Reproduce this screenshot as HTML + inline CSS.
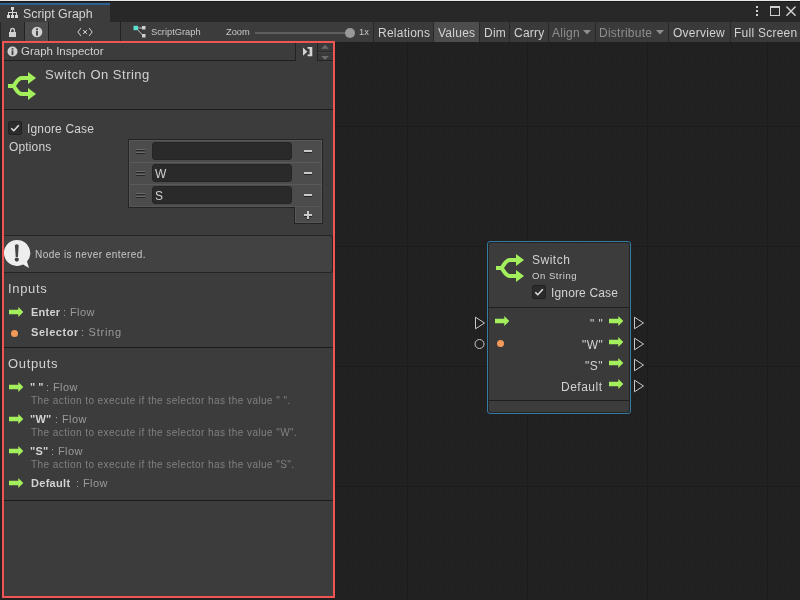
<!DOCTYPE html>
<html><head><meta charset="utf-8">
<style>
*{margin:0;padding:0;box-sizing:border-box}
html,body{width:800px;height:600px;overflow:hidden;background:#212121;font-family:"Liberation Sans",sans-serif;}
.a{position:absolute}
.t{position:absolute;white-space:nowrap;line-height:1;color:#d2d2d2;-webkit-font-smoothing:antialiased;will-change:transform}
#grid{left:335px;top:42px;width:465px;height:558px;background-color:#212121;
background-image:
linear-gradient(to right,#1b1b1b 1px,transparent 1px),
linear-gradient(to bottom,#1b1b1b 1px,transparent 1px),
linear-gradient(to right,#1f1f1f 1px,transparent 1px),
linear-gradient(to bottom,#202020 1px,transparent 1px);
background-size:120px 120px,120px 120px,12px 12px,12px 12px;
background-position:72px 84px,72px 84px,0px 0px,0px 0px;}
.btn{position:absolute;top:22px;height:20px;background:#3a3a3a}
.sep{position:absolute;height:1px;background:#1c1c1c}
</style></head><body>
<!-- top strip -->
<div class="a" style="left:0;top:0;width:800px;height:1px;background:#e8e8e8"></div>
<div class="a" style="left:0;top:1px;width:800px;height:21px;background:#282828"></div>
<div class="a" style="left:0;top:1px;width:800px;height:1px;background:#1a1a1a"></div>
<!-- tab -->
<div class="a" style="left:0;top:3px;width:110px;height:19px;background:#3c3c3c"></div>
<div class="a" style="left:0;top:3px;width:110px;height:2px;background:#2d6194"></div>
<svg class="a" style="left:7px;top:7px" width="12" height="11" viewBox="0 0 12 11">
<g fill="#d8d8d8"><rect x="4" y="0" width="3" height="3"/><rect x="5" y="3" width="1" height="2"/><rect x="1" y="5" width="9" height="1"/><rect x="1" y="5" width="1" height="3"/><rect x="9" y="5" width="1" height="3"/><rect x="5" y="5" width="1" height="3"/><rect x="0" y="8" width="3" height="3"/><rect x="4" y="8" width="3" height="3"/><rect x="8" y="8" width="3" height="3"/></g></svg>
<div class="t" style="left:23px;top:8px;font-size:12.4px;color:#d4d4d4">Script Graph</div>
<!-- window icons -->
<div class="a" style="left:756px;top:6px;width:2px;height:2px;background:#d0d0d0"></div>
<div class="a" style="left:756px;top:10px;width:2px;height:2px;background:#d0d0d0"></div>
<div class="a" style="left:756px;top:14px;width:2px;height:2px;background:#d0d0d0"></div>
<div class="a" style="left:770px;top:6px;width:10px;height:10px;border:1px solid #d0d0d0;border-top-width:2px"></div>
<svg class="a" style="left:786px;top:6px" width="11" height="11" viewBox="0 0 11 11"><path d="M0.9 1L9.1 9.2M9.1 1L0.9 9.2" stroke="#d0d0d0" stroke-width="1.5" stroke-linecap="round"/></svg>

<!-- toolbar -->
<div class="a" style="left:0;top:22px;width:800px;height:20px;background:#282828"></div>
<div class="a" style="left:1px;top:22px;width:372px;height:20px;background:#3c3c3c"></div>
<div class="a" style="left:25px;top:22px;width:23px;height:19px;background:#4c4c4c"></div>
<div class="a" style="left:24px;top:22px;width:1px;height:19px;background:#232323"></div>
<div class="a" style="left:48px;top:22px;width:1px;height:19px;background:#232323"></div>
<div class="a" style="left:120px;top:22px;width:1px;height:19px;background:#232323"></div>
<!-- lock -->
<svg class="a" style="left:8px;top:27px" width="10" height="11" viewBox="0 0 10 11"><path d="M2.6 5.2V3.4a1.9 1.9 0 0 1 3.8 0V5.2" fill="none" stroke="#d0d0d0" stroke-width="1.3"/><rect x="1" y="5" width="7" height="5" fill="#d0d0d0"/></svg>
<!-- info -->
<svg class="a" style="left:31px;top:26px" width="12" height="12" viewBox="0 0 12 12"><circle cx="6" cy="6" r="5.3" fill="#d0d0d0"/><rect x="5.1" y="2.4" width="1.8" height="1.6" fill="#3a3a3a"/><rect x="5.1" y="4.8" width="1.8" height="4.8" fill="#3a3a3a"/></svg>
<!-- <x> -->
<svg class="a" style="left:77px;top:27px" width="16" height="10" viewBox="0 0 16 10"><path d="M4 1L0.8 5L4 9M12 1L15.2 5L12 9M6 3L10 7M10 3L6 7" fill="none" stroke="#d0d0d0" stroke-width="1"/></svg>
<!-- scriptgraph icon -->
<svg class="a" style="left:133px;top:25px" width="14" height="14" viewBox="0 0 14 14"><path d="M3 3H10M3 3L10 10.5" stroke="#bdbdbd" stroke-width="1"/><rect x="0.5" y="0.8" width="4.5" height="4.4" fill="#5ce0d0"/><rect x="9" y="1" width="3.5" height="3.5" fill="#cfcfcf"/><rect x="9" y="9" width="3.5" height="3.5" fill="#cfcfcf"/></svg>
<div class="t" style="left:151px;top:28px;font-size:9.3px;color:#c8c8c8">ScriptGraph</div>
<div class="t" style="left:226px;top:28px;font-size:9.3px;color:#c8c8c8">Zoom</div>
<div class="a" style="left:255px;top:32px;width:95px;height:2px;background:#5e5e5e"></div>
<div class="a" style="left:345px;top:28px;width:10px;height:10px;border-radius:50%;background:#999"></div>
<div class="t" style="left:359px;top:28px;font-size:9.3px;color:#c8c8c8">1x</div>

<div class="btn" style="left:374px;width:59px"></div>
<div class="btn" style="left:434px;width:45px;background:#4d4d4d"></div>
<div class="btn" style="left:480px;width:29px"></div>
<div class="btn" style="left:510px;width:38px"></div>
<div class="btn" style="left:549px;width:46px"></div>
<div class="btn" style="left:596px;width:72px"></div>
<div class="btn" style="left:669px;width:61px"></div>
<div class="btn" style="left:731px;width:69px"></div>
<div class="t" style="left:378px;top:27px;font-size:12px;letter-spacing:0.25px">Relations</div>
<div class="t" style="left:438px;top:27px;font-size:12px;letter-spacing:0.25px">Values</div>
<div class="t" style="left:484px;top:27px;font-size:12px;letter-spacing:0.25px">Dim</div>
<div class="t" style="left:514px;top:27px;font-size:12px;letter-spacing:0.25px">Carry</div>
<div class="t" style="left:552px;top:27px;font-size:12px;letter-spacing:0.25px;color:#8e8e8e">Align</div>
<svg class="a" style="left:583px;top:30px" width="8" height="5"><path d="M0 0H8L4 4.5Z" fill="#8e8e8e"/></svg>
<div class="t" style="left:599px;top:27px;font-size:12px;letter-spacing:0.25px;color:#8e8e8e">Distribute</div>
<svg class="a" style="left:656px;top:30px" width="8" height="5"><path d="M0 0H8L4 4.5Z" fill="#8e8e8e"/></svg>
<div class="t" style="left:673px;top:27px;font-size:12px;letter-spacing:0.25px">Overview</div>
<div class="t" style="left:734px;top:27px;font-size:12px;letter-spacing:0.25px">Full Screen</div>

<!-- graph -->
<div id="grid" class="a"></div>

<!-- inspector -->
<div class="a" style="left:0;top:41px;width:2px;height:559px;background:#232323"></div>
<div class="a" style="left:2px;top:41px;width:333px;height:557px;border:2px solid #f05454;background:#3c3c3c"></div>
<div class="a" style="left:4px;top:43px;width:291px;height:17px;background:#3c3c3c"></div>
<div class="sep" style="left:4px;top:60px;width:292px;background:#1e1e1e"></div>
<svg class="a" style="left:7px;top:46px" width="11" height="11" viewBox="0 0 11 11"><circle cx="5.5" cy="5.5" r="5" fill="#d0d0d0"/><rect x="4.6" y="2.2" width="1.8" height="1.5" fill="#3c3c3c"/><rect x="4.6" y="4.4" width="1.8" height="4.5" fill="#3c3c3c"/></svg>
<div class="t" style="left:21px;top:46px;font-size:11.5px">Graph Inspector</div>
<div class="a" style="left:295px;top:43px;width:1px;height:18px;background:#232323"></div>
<svg class="a" style="left:302px;top:46px" width="12" height="12" viewBox="0 0 12 12"><path d="M1 1.6L5.3 5.7L1 9.8Z" fill="#d4d4d4"/><path d="M5.6 1H10.3V10.3H5.6V8.6H7.6V2.7H5.6Z" fill="#d4d4d4"/></svg>
<div class="a" style="left:317px;top:43px;width:16px;height:18px;background:#3a3a3a;border-left:1px solid #232323;border-bottom:1px solid #232323"></div>
<div class="a" style="left:318px;top:51px;width:15px;height:1px;background:#2a2a2a"></div>
<div class="a" style="left:318px;top:52px;width:15px;height:1px;background:#424242"></div>
<svg class="a" style="left:318px;top:43px" width="15" height="18"><path d="M3.2 5.8L7 1.8L10.8 5.8Z" fill="#6c6c6c"/><path d="M3.2 13L7 17L10.8 13Z" fill="#6c6c6c"/></svg>

<!-- icon -->
<svg class="a" style="left:8px;top:72px" width="29" height="29" viewBox="0 0 29 29"><g fill="none" stroke="#a3f05c" stroke-width="4"><path d="M0 14H4.5C7.5 14 8.5 6 14 6H21"/><path d="M4.5 14C7.5 14 8.5 22 14 22H21"/></g><g fill="#a3f05c"><path d="M20 0L28 6L20 12Z"/><path d="M20 16L28 22L20 28Z"/></g></svg>
<div class="t" style="left:45px;top:68px;font-size:13px;letter-spacing:0.5px">Switch On String</div>
<div class="sep" style="left:4px;top:109px;width:329px"></div>

<!-- ignore case -->
<div class="a" style="left:8px;top:121px;width:14px;height:14px;border-radius:2px;background:#2b2b2b;border:1px solid #222"></div>
<svg class="a" style="left:9px;top:122px" width="12" height="12" viewBox="0 0 12 12"><path d="M2.3 6.2L4.8 8.7L9.8 3.3" fill="none" stroke="#e0e0e0" stroke-width="1.6"/></svg>
<div class="t" style="left:27px;top:123px;font-size:12px;letter-spacing:0.15px">Ignore Case</div>
<div class="t" style="left:9px;top:141px;font-size:12px;letter-spacing:0.15px">Options</div>

<!-- list -->
<div class="a" style="left:128px;top:139px;width:195px;height:69px;background:#4c4c4c;border:1px solid #242424;box-shadow:inset 0 0 0 1px #585858"></div>
<div class="a" style="left:129px;top:162px;width:193px;height:1px;background:#5a5a5a"></div>
<div class="a" style="left:129px;top:184px;width:193px;height:1px;background:#5a5a5a"></div>
<div class="a" style="left:294px;top:206px;width:29px;height:18px;background:#4c4c4c;border:1px solid #242424;border-top:none;box-shadow:inset 1px -1px 0 #585858,inset -1px 0 0 #585858"></div>
<div class="a" style="left:129px;top:206px;width:193px;height:1px;background:#585858"></div>
<div class="a" style="left:295px;top:207px;width:27px;height:1px;background:#4c4c4c"></div>
<div class="a" style="left:152px;top:142px;width:140px;height:18px;background:#2a2a2a;border:1px solid #242424;border-radius:3px"></div>
<div class="a" style="left:152px;top:164px;width:140px;height:18px;background:#2a2a2a;border:1px solid #242424;border-radius:3px"></div>
<div class="a" style="left:152px;top:186px;width:140px;height:18px;background:#2a2a2a;border:1px solid #242424;border-radius:3px"></div>
<div class="a" style="left:136px;top:149px;width:9px;height:1px;background:#6a6a6a"></div>
<div class="a" style="left:136px;top:150px;width:9px;height:1px;background:#262626"></div>
<div class="a" style="left:136px;top:152px;width:9px;height:1px;background:#6a6a6a"></div>
<div class="a" style="left:136px;top:153px;width:9px;height:1px;background:#262626"></div>
<div class="a" style="left:136px;top:171px;width:9px;height:1px;background:#6a6a6a"></div>
<div class="a" style="left:136px;top:172px;width:9px;height:1px;background:#262626"></div>
<div class="a" style="left:136px;top:174px;width:9px;height:1px;background:#6a6a6a"></div>
<div class="a" style="left:136px;top:175px;width:9px;height:1px;background:#262626"></div>
<div class="a" style="left:136px;top:193px;width:9px;height:1px;background:#6a6a6a"></div>
<div class="a" style="left:136px;top:194px;width:9px;height:1px;background:#262626"></div>
<div class="a" style="left:136px;top:196px;width:9px;height:1px;background:#6a6a6a"></div>
<div class="a" style="left:136px;top:197px;width:9px;height:1px;background:#262626"></div>
<div class="t" style="left:155px;top:168px;font-size:12px">W</div>
<div class="t" style="left:155px;top:190px;font-size:12px">S</div>
<div class="a" style="left:304px;top:150px;width:8px;height:2px;background:#c8c8c8;box-shadow:0 1px 0 #262626"></div>
<div class="a" style="left:304px;top:172px;width:8px;height:2px;background:#c8c8c8;box-shadow:0 1px 0 #262626"></div>
<div class="a" style="left:304px;top:194px;width:8px;height:2px;background:#c8c8c8;box-shadow:0 1px 0 #262626"></div>
<div class="a" style="left:304px;top:214px;width:8px;height:2px;background:#c8c8c8;box-shadow:0 1px 0 #262626"></div>
<div class="a" style="left:307px;top:211px;width:2px;height:8px;background:#c8c8c8;box-shadow:0 1px 0 #262626"></div>

<!-- warning -->
<div class="a" style="left:4px;top:235px;width:329px;height:38px;background:#424242;border:1px solid #242424;border-left:none;border-radius:0 3px 3px 0"></div>
<svg class="a" style="left:4px;top:239px" width="28" height="32" viewBox="0 0 28 32"><path d="M13 1A13 13 0 1 0 19 25.5L25 29L23 22.5A13 13 0 0 0 13 1Z" fill="#eeeeee"/><path d="M10.9 6.2Q12.8 4.4 14.7 6.2L13.9 18H11.7Z" fill="#454545"/><circle cx="12.8" cy="20.6" r="2.1" fill="#454545"/></svg>
<div class="t" style="left:35px;top:250px;font-size:10px;letter-spacing:0.45px;color:#c8c8c8">Node is never entered.</div>

<!-- inputs -->
<div class="t" style="left:8px;top:282px;font-size:13px;letter-spacing:0.65px">Inputs</div>
<svg class="a" style="left:9px;top:307px" width="15" height="11" viewBox="0 0 15 11"><path d="M0 2.8H9.3V0L14.3 5L9.3 10V7.2H0Z" fill="#a3f05c"/></svg>
<div class="t" style="left:31px;top:307px;font-size:11px;font-weight:bold;letter-spacing:0.25px">Enter</div><div class="t" style="left:63.0px;top:307px;font-size:11px;letter-spacing:0.4px;color:#9a9a9a">: Flow</div>
<div class="a" style="left:11px;top:330px;width:7px;height:7px;border-radius:50%;background:#f39a58"></div>
<div class="t" style="left:31px;top:327px;font-size:11px;font-weight:bold;letter-spacing:0.55px">Selector</div><div class="t" style="left:81.0px;top:327px;font-size:11px;letter-spacing:0.75px;color:#9a9a9a">: String</div>
<div class="sep" style="left:4px;top:347px;width:329px"></div>

<!-- outputs -->
<div class="t" style="left:8px;top:357px;font-size:13px;letter-spacing:0.65px">Outputs</div>
<svg class="a" style="left:9px;top:382px" width="15" height="11" viewBox="0 0 15 11"><path d="M0 2.8H9.3V0L14.3 5L9.3 10V7.2H0Z" fill="#a3f05c"/></svg>
<div class="t" style="left:30px;top:382px;font-size:11px;font-weight:bold;letter-spacing:0.0px">" "</div><div class="t" style="left:45.7px;top:382px;font-size:11px;letter-spacing:0.4px;color:#9a9a9a">: Flow</div>
<div class="t" style="left:31px;top:396px;font-size:10px;letter-spacing:0.43px;color:#808080">The action to execute if the selector has the value " ".</div>
<svg class="a" style="left:9px;top:414px" width="15" height="11" viewBox="0 0 15 11"><path d="M0 2.8H9.3V0L14.3 5L9.3 10V7.2H0Z" fill="#a3f05c"/></svg>
<div class="t" style="left:30px;top:414px;font-size:11px;font-weight:bold;letter-spacing:0.2px">"W"</div><div class="t" style="left:54.7px;top:414px;font-size:11px;letter-spacing:0.4px;color:#9a9a9a">: Flow</div>
<div class="t" style="left:31px;top:428px;font-size:10px;letter-spacing:0.43px;color:#808080">The action to execute if the selector has the value "W".</div>
<svg class="a" style="left:9px;top:446px" width="15" height="11" viewBox="0 0 15 11"><path d="M0 2.8H9.3V0L14.3 5L9.3 10V7.2H0Z" fill="#a3f05c"/></svg>
<div class="t" style="left:30px;top:446px;font-size:11px;font-weight:bold;letter-spacing:0.2px">"S"</div><div class="t" style="left:50.7px;top:446px;font-size:11px;letter-spacing:0.4px;color:#9a9a9a">: Flow</div>
<div class="t" style="left:31px;top:460px;font-size:10px;letter-spacing:0.43px;color:#808080">The action to execute if the selector has the value "S".</div>
<svg class="a" style="left:9px;top:478px" width="15" height="11" viewBox="0 0 15 11"><path d="M0 2.8H9.3V0L14.3 5L9.3 10V7.2H0Z" fill="#a3f05c"/></svg>
<div class="t" style="left:31px;top:478px;font-size:11px;font-weight:bold;letter-spacing:0.3px">Default</div><div class="t" style="left:75.7px;top:478px;font-size:11px;letter-spacing:0.4px;color:#9a9a9a">: Flow</div>
<div class="sep" style="left:4px;top:500px;width:329px"></div>

<!-- node -->
<div class="a" style="left:487px;top:241px;width:144px;height:173px;border:1px solid #367ba2;border-radius:3px;background:#232323"></div>
<div class="a" style="left:489px;top:243px;width:140px;height:64px;background:#3c3c3c;border-radius:2px 2px 0 0"></div>
<div class="a" style="left:489px;top:307px;width:140px;height:1px;background:#1f1f1f"></div>
<div class="a" style="left:489px;top:308px;width:140px;height:92px;background:#3a3a3a"></div>
<div class="a" style="left:489px;top:400px;width:140px;height:1px;background:#1f1f1f"></div>
<div class="a" style="left:489px;top:401px;width:140px;height:11px;background:#3c3c3c;border-radius:0 0 2px 2px"></div>
<svg class="a" style="left:496px;top:254px" width="29" height="29" viewBox="0 0 29 29"><g fill="none" stroke="#a3f05c" stroke-width="4"><path d="M0 14H4.5C7.5 14 8.5 6 14 6H21"/><path d="M4.5 14C7.5 14 8.5 22 14 22H21"/></g><g fill="#a3f05c"><path d="M20 0L28 6L20 12Z"/><path d="M20 16L28 22L20 28Z"/></g></svg>
<div class="t" style="left:532px;top:254px;font-size:12px;letter-spacing:0.5px">Switch</div>
<div class="t" style="left:532px;top:271px;font-size:9.5px;letter-spacing:0.55px">On String</div>
<div class="a" style="left:532px;top:285px;width:14px;height:14px;border-radius:2px;background:#2b2b2b;border:1px solid #222"></div>
<svg class="a" style="left:533px;top:286px" width="12" height="12" viewBox="0 0 12 12"><path d="M2.3 6.2L4.8 8.7L9.8 3.3" fill="none" stroke="#e0e0e0" stroke-width="1.6"/></svg>
<div class="t" style="left:551px;top:287px;font-size:12px;letter-spacing:0.15px">Ignore Case</div>

<svg class="a" style="left:495px;top:316px" width="15" height="11" viewBox="0 0 15 11"><path d="M0 2.8H9.3V0L14.3 5L9.3 10V7.2H0Z" fill="#a3f05c"/></svg>
<div class="a" style="left:497px;top:340px;width:7px;height:7px;border-radius:50%;background:#f39a58"></div>
<svg class="a" style="left:609px;top:316px" width="15" height="11" viewBox="0 0 15 11"><path d="M0 2.8H9.3V0L14.3 5L9.3 10V7.2H0Z" fill="#a3f05c"/></svg>
<svg class="a" style="left:609px;top:337px" width="15" height="11" viewBox="0 0 15 11"><path d="M0 2.8H9.3V0L14.3 5L9.3 10V7.2H0Z" fill="#a3f05c"/></svg>
<svg class="a" style="left:609px;top:358px" width="15" height="11" viewBox="0 0 15 11"><path d="M0 2.8H9.3V0L14.3 5L9.3 10V7.2H0Z" fill="#a3f05c"/></svg>
<svg class="a" style="left:609px;top:379px" width="15" height="11" viewBox="0 0 15 11"><path d="M0 2.8H9.3V0L14.3 5L9.3 10V7.2H0Z" fill="#a3f05c"/></svg>
<div class="t" style="right:197px;top:318px;font-size:12px;letter-spacing:0.5px">" "</div>
<div class="t" style="right:197px;top:339px;font-size:12px;letter-spacing:0.5px">"W"</div>
<div class="t" style="right:197px;top:360px;font-size:12px;letter-spacing:0.5px">"S"</div>
<div class="t" style="right:197px;top:381px;font-size:12px;letter-spacing:0.5px">Default</div>

<svg class="a" style="left:474px;top:316px" width="12" height="14" viewBox="0 0 12 14"><path d="M1.5 1.2V12.8L10.5 7Z" fill="none" stroke="#c8c8c8" stroke-width="1"/></svg>
<svg class="a" style="left:474px;top:338px" width="12" height="12" viewBox="0 0 12 12"><circle cx="5.5" cy="6" r="4.5" fill="none" stroke="#c8c8c8" stroke-width="1"/></svg>
<svg class="a" style="left:633px;top:316px" width="12" height="14" viewBox="0 0 12 14"><path d="M1.5 1.2V12.8L10.5 7Z" fill="none" stroke="#c8c8c8" stroke-width="1"/></svg>
<svg class="a" style="left:633px;top:337px" width="12" height="14" viewBox="0 0 12 14"><path d="M1.5 1.2V12.8L10.5 7Z" fill="none" stroke="#c8c8c8" stroke-width="1"/></svg>
<svg class="a" style="left:633px;top:358px" width="12" height="14" viewBox="0 0 12 14"><path d="M1.5 1.2V12.8L10.5 7Z" fill="none" stroke="#c8c8c8" stroke-width="1"/></svg>
<svg class="a" style="left:633px;top:379px" width="12" height="14" viewBox="0 0 12 14"><path d="M1.5 1.2V12.8L10.5 7Z" fill="none" stroke="#c8c8c8" stroke-width="1"/></svg>
</body></html>
